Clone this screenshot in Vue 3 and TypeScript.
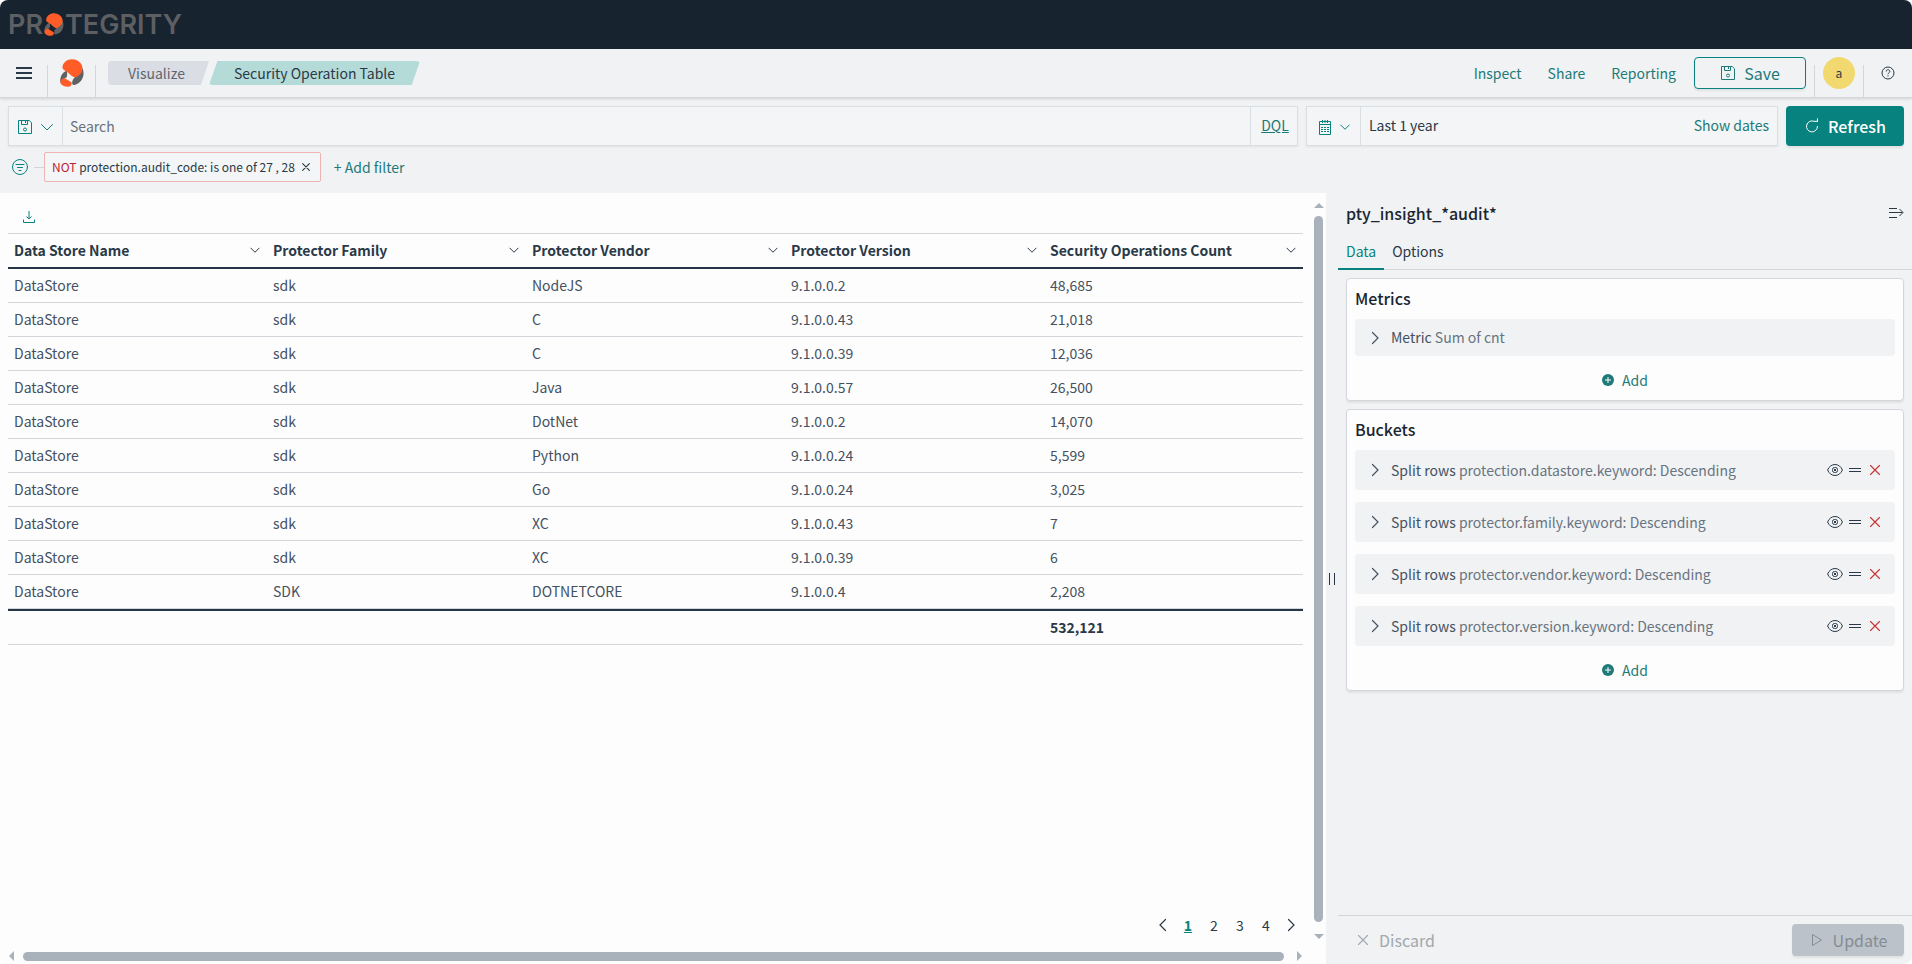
<script setup lang="ts">
import { ref } from 'vue'

const query = ref('')
const columns = ['Data Store Name', 'Protector Family', 'Protector Vendor', 'Protector Version', 'Security Operations Count']
const rows = [
  ['DataStore', 'sdk', 'NodeJS', '9.1.0.0.2', '48,685'],
  ['DataStore', 'sdk', 'C', '9.1.0.0.43', '21,018'],
  ['DataStore', 'sdk', 'C', '9.1.0.0.39', '12,036'],
  ['DataStore', 'sdk', 'Java', '9.1.0.0.57', '26,500'],
  ['DataStore', 'sdk', 'DotNet', '9.1.0.0.2', '14,070'],
  ['DataStore', 'sdk', 'Python', '9.1.0.0.24', '5,599'],
  ['DataStore', 'sdk', 'Go', '9.1.0.0.24', '3,025'],
  ['DataStore', 'sdk', 'XC', '9.1.0.0.43', '7'],
  ['DataStore', 'sdk', 'XC', '9.1.0.0.39', '6'],
  ['DataStore', 'SDK', 'DOTNETCORE', '9.1.0.0.4', '2,208'],
]
const buckets = ['protection.datastore', 'protector.family', 'protector.vendor', 'protector.version']
</script>

<template>
  <div class="app">
    <svg class="symbols" aria-hidden="true">
      <symbol id="disk" viewBox="0 0 16 16">
        <path d="M1.5 1.5h10.8l2.2 2.2v10.8h-13zM4.5 1.5v4h6v-4M8.5 2v2" fill="none" stroke="currentColor" />
        <circle cx="8" cy="10.5" r="1.5" fill="none" stroke="currentColor" />
      </symbol>
      <symbol id="down" viewBox="0 0 16 16">
        <path d="M2.5 5.5 8 11l5.5-5.5" fill="none" stroke="currentColor" stroke-linecap="round" vector-effect="non-scaling-stroke" />
      </symbol>
      <symbol id="right" viewBox="0 0 16 16">
        <path d="M5.5 2.5 11 8l-5.5 5.5" fill="none" stroke="currentColor" stroke-width="1.2" stroke-linecap="round" />
      </symbol>
      <symbol id="left" viewBox="0 0 16 16">
        <path d="M10.5 2.5 5 8l5.5 5.5" fill="none" stroke="currentColor" stroke-width="1.2" stroke-linecap="round" />
      </symbol>
      <symbol id="cross" viewBox="0 0 16 16">
        <path d="m3.5 3.5 9 9m0-9-9 9" fill="none" stroke="currentColor" stroke-width="1.1" stroke-linecap="round" vector-effect="non-scaling-stroke" />
      </symbol>
      <symbol id="mark" viewBox="0 0 24 28">
        <path d="M22.300 9C25.500 15 22.500 24 14.500 26c-2.500.4-3-2.500-1.500-5.500 2-3.500 7.500-5 9.300-11.500z" fill="#606163" />
        <path d="M7.500 11.500C3 12.500-.5 17.500.3 24c1.200-3 3.500-4.500 6.200-5.500 1.200-2 .2-5 1-7z" fill="#606163" />
        <path d="M2.500 7.500C3.500 3 7.500.2 12 .3c6.500.2 10.500 4.500 10.500 9.200 0 5-4 7.500-7.500 9-2.500-.5-4.500-2.500-6.500-4.500-1.500-1.500-3.500-2-5-3.500-.8-.8-1.300-1.800-1-3z" fill="#ff5c28" />
        <path d="m4.300 19 7.200 4.300c.7 2-.2 3.700-2 4.200-3 .8-6.500-.2-8.500-2.500-1.500-2.500.3-5.200 3.300-6z" fill="#ff5c28" />
      </symbol>
    </svg>

    <div class="brandbar">
      <a class="wordmark" href="#" aria-label="Protegrity">
        <span>PR</span><svg width="20" height="23"><use href="#mark" /></svg><span>TEGRITY</span>
      </a>
    </div>

    <header class="header">
      <button class="menu" aria-label="Menu">
        <svg width="16" height="12"><path d="M0 1h16M0 6h16M0 11h16" stroke="currentColor" stroke-width="2" /></svg>
      </button>
      <a class="home" href="#" aria-label="Home"><svg width="24" height="28"><use href="#mark" /></svg></a>
      <nav class="crumbs" aria-label="Breadcrumbs">
        <a class="crumb first" href="#">Visualize</a>
        <span class="crumb last">Security Operation Table</span>
      </nav>
      <div class="actions">
        <button class="link">Inspect</button>
        <button class="link">Share</button>
        <button class="link">Reporting</button>
        <button class="save"><svg width="16" height="16"><use href="#disk" /></svg>Save</button>
      </div>
      <div class="account"><button class="avatar">a</button></div>
      <button class="help" aria-label="Help">
        <svg width="14" height="14" viewBox="0 0 14 14" fill="none" stroke="currentColor">
          <circle cx="7" cy="7" r="6" />
          <path d="M5.200 5.500c0-2.400 3.600-2.400 3.600 0 0 1.400-1.800 1.300-1.800 2.700M7 9.300v1.200" />
        </svg>
      </button>
    </header>

    <div class="querybar">
      <div class="box search">
        <button class="pick" aria-label="Saved queries">
          <svg width="16" height="16"><use href="#disk" /></svg>
          <svg width="16" height="16"><use href="#down" /></svg>
        </button>
        <input v-model="query" type="text" placeholder="Search" aria-label="Search" />
        <button class="dql">DQL</button>
      </div>
      <div class="box dates">
        <button class="pick" aria-label="Date quick select">
          <svg width="16" height="16" viewBox="0 0 16 16" fill="none" stroke="currentColor">
            <path d="M2.500 2.500h11v13h-11zM2.500 5.500h11M5.500 1v3M8 1v3M10.500 1v3" />
            <path d="M4 8.500h8M4 10.500h8M4 12.500h8" stroke-dasharray="2 1" />
          </svg>
          <svg width="12" height="12"><use href="#down" /></svg>
        </button>
        <button class="range">Last 1 year</button>
        <button class="show">Show dates</button>
      </div>
      <button class="refresh">
        <svg width="16" height="16" viewBox="0 0 16 16" fill="none" stroke="currentColor" stroke-linecap="round">
          <path d="M13.500 8.500A5.500 5.500 0 1 1 10 3.300h3.300M13.500.8v2.700" />
        </svg>
        Refresh
      </button>
    </div>

    <div class="filterbar">
      <button class="filter-menu" aria-label="Filter options">
        <svg width="16" height="16" viewBox="0 0 16 16" fill="none" stroke="currentColor" stroke-linecap="round">
          <circle cx="8" cy="8" r="7.500" /><path d="M4 5.500h8M5.500 8.500h5M7 11.500h2" />
        </svg>
      </button>
      <span class="dash"></span>
      <span class="pill">
        <span><b>NOT</b> protection.audit_code: is one of 27 , 28</span>
        <button aria-label="Remove filter"><svg width="12" height="12"><use href="#cross" /></svg></button>
      </span>
      <button class="add-filter">+ Add filter</button>
    </div>

    <main class="main">
      <section class="visual">
        <div class="content">
          <div class="tools">
            <button aria-label="Download">
              <svg width="12" height="12" viewBox="0 0 12 12" fill="none" stroke="currentColor">
                <path d="M6 0v7.500M3.500 5.500 6 8l2.500-2.500M.5 8.500v3h11v-3" />
              </svg>
            </button>
          </div>
          <table>
            <thead>
              <tr>
                <th v-for="c in columns" :key="c" scope="col">
                  <button>{{ c }}<svg width="12" height="12"><use href="#down" /></svg></button>
                </th>
              </tr>
            </thead>
            <tbody>
              <tr v-for="(r, i) in rows" :key="i"><td v-for="(v, j) in r" :key="j">{{ v }}</td></tr>
            </tbody>
            <tfoot>
              <tr><td></td><td></td><td></td><td></td><td>532,121</td></tr>
            </tfoot>
          </table>
          <nav class="pages" aria-label="Pagination">
            <button class="arrow" aria-label="Previous page"><svg width="16" height="16"><use href="#left" /></svg></button>
            <button class="current" aria-current="page">1</button>
            <button>2</button>
            <button>3</button>
            <button>4</button>
            <button class="arrow" aria-label="Next page"><svg width="16" height="16"><use href="#right" /></svg></button>
          </nav>
        </div>
        <div class="vscroll"><i class="up"></i><div class="thumb"></div><i class="dn"></i></div>
        <div class="hscroll"><i class="lt"></i><div class="thumb"></div><i class="rt"></i></div>
      </section>

      <button class="resizer" aria-label="Resize panel"></button>

      <aside class="editor">
        <div class="title">
          <h2>pty_insight_*audit*</h2>
          <button aria-label="Collapse panel">
            <svg width="16" height="12" viewBox="0 0 16 12" fill="none" stroke="currentColor"><path d="M1 1.500h8M1 5.500h13.500M1 10.500h8M11.500 2l3.500 3.500L11.500 9" /></svg>
          </button>
        </div>
        <div class="tabs" role="tablist">
          <button class="active" role="tab" aria-selected="true">Data</button>
          <button role="tab" aria-selected="false">Options</button>
        </div>
        <div class="groups">
          <section class="group">
            <h3>Metrics</h3>
            <div class="item short">
              <button class="toggle"><svg width="16" height="16"><use href="#right" /></svg><span>Metric <em>Sum of cnt</em></span></button>
            </div>
            <button class="add">
              <svg width="12" height="12"><circle cx="6" cy="6" r="6" fill="currentColor" /><path d="M3 6h6M6 3v6" stroke="#fff" /></svg>Add
            </button>
          </section>
          <section class="group">
            <h3>Buckets</h3>
            <div v-for="b in buckets" :key="b" class="item">
              <button class="toggle"><svg width="16" height="16"><use href="#right" /></svg><span>Split rows <em>{{ b }}.keyword: Descending</em></span></button>
              <button aria-label="Disable aggregation">
                <svg width="16" height="16" viewBox="0 0 16 16" fill="none" stroke="currentColor">
                  <path d="M.6 8C2 4.500 4.800 2.500 8 2.500S14 4.500 15.400 8C14 11.500 11.200 13.500 8 13.500S2 11.500.6 8z" /><rect x="5.500" y="5.500" width="5" height="5" rx="2" /><rect x="7.500" y="7.500" width="1" height="1" />
                </svg>
              </button>
              <button aria-label="Reorder"><svg width="12" height="12"><path d="M0 4.500h12M0 7.500h12" stroke="currentColor" /></svg></button>
              <button class="remove" aria-label="Remove"><svg width="16" height="16"><use href="#cross" /></svg></button>
            </div>
            <button class="add">
              <svg width="12" height="12"><circle cx="6" cy="6" r="6" fill="currentColor" /><path d="M3 6h6M6 3v6" stroke="#fff" /></svg>Add
            </button>
          </section>
        </div>
        <div class="footer">
          <button class="discard" disabled><svg width="16" height="16"><use href="#cross" /></svg>Discard</button>
          <button class="update" disabled>
            <svg width="16" height="16" viewBox="0 0 16 16"><path d="M3.500 2.500v11L12.500 8z" fill="none" stroke="currentColor" stroke-linejoin="round" /></svg>Update
          </button>
        </div>
      </aside>
    </main>
  </div>
</template>

<style>
body { margin: 0; background: #fff; }
</style>

<style scoped>
.app {
  --teal: #07827e;
  --ink: #2a3947;
  --line: #d3d7db;
  display: flex; flex-direction: column; height: 100vh;
  border-radius: 8px; overflow: hidden;
  font: 14px/20px "Noto Sans CJK SC", "Open Sans", sans-serif;
  color: var(--ink); background: #f0f2f4;
}
* { box-sizing: border-box; }
.symbols { position: absolute; width: 0; height: 0; }
svg { display: block; flex: none; }
button { font: inherit; color: inherit; background: none; border: 0; padding: 0; margin: 0; white-space: nowrap; }
a { color: inherit; text-decoration: none; }
h2, h3 { margin: 0; font-size: 16px; line-height: 22px; font-weight: 500; color: #1a2530; }

.brandbar { flex: none; display: flex; align-items: center; height: 49px; padding: 0 8px; background: #17232f; }
.wordmark { display: flex; align-items: center; gap: 1px; color: #5d5f62; font: 600 27px/32px Inter, sans-serif; }

.header { flex: none; display: flex; height: 49px; border-bottom: 1px solid var(--line); box-shadow: 0 1px 3px #0002; }
.menu { width: 47px; padding-left: 1px; display: grid; place-items: center; }
.home { width: 49px; margin-top: 16px; border: solid var(--line); border-width: 0 1px; display: grid; place-items: center; }
.home svg { margin-top: -16px; }
.crumbs { display: flex; align-items: center; padding-left: 12px; }
.crumb { height: 24px; line-height: 24px; padding: 0 20px; }
.first { width: 101px; background: #dadde3; color: #5d6570; border-radius: 4px 0 0 4px; clip-path: polygon(0 0, 100% 0, 92% 100%, 0 100%); }
.last { padding: 0 25px; background: #b5dbd9; border-radius: 4px; clip-path: polygon(4% 0, 100% 0, 96% 100%, 0 100%); }
.actions { margin-left: auto; display: flex; align-items: center; gap: 26px; padding-right: 8px; color: #1d7a78; }
.save { display: flex; align-items: center; justify-content: center; gap: 8px; width: 112px; height: 32px; margin-left: -8px; border: 1px solid var(--teal); border-radius: 4px; font-size: 16px; box-shadow: 0 2px 2px #0001; }
.account { width: 50px; margin-top: 16px; border: solid var(--line); border-width: 0 1px; display: grid; place-items: center; }
.avatar { width: 32px; height: 32px; margin-top: -16px; border-radius: 50%; background: #f1d86f; font-size: 12px; }
.help { width: 48px; display: grid; place-items: center; }

.querybar { flex: none; display: flex; gap: 8px; padding: 8px 8px 0; }
.box { display: flex; height: 40px; background: #f3f5f6; border: 1px solid #d9dfe2; box-shadow: 0 1px 2px #0001; }
.box button, .search input { padding-bottom: 2px; }
.search { flex: 1; }
.pick { display: flex; align-items: center; justify-content: center; gap: 6px; border-right: 1px solid #d9dfe2; color: var(--teal); }
.box .pick { width: 54px; padding: 2px 0 0; }
.search input { flex: 1; border: 0; background: none; outline: 0; padding-left: 7px; font: inherit; }
.search input::placeholder { color: #69707a; opacity: 1; }
.dql { width: 47px; padding-left: 2px; border-left: 1px solid #d9dfe2; color: #1d7a78; text-decoration: underline; }
.dates { width: 472px; }
.range { flex: 1; text-align: left; padding-left: 8px; }
.show { padding-right: 8px; color: #1d7a78; }
.refresh { display: flex; align-items: center; justify-content: center; gap: 8px; width: 118px; height: 40px; border-radius: 4px; background: var(--teal); color: #fff; font-size: 16px; font-weight: 500; box-shadow: 0 2px 2px #0001; }

.filterbar { flex: none; display: flex; align-items: center; height: 47px; padding: 0 12px 5px; }
.filter-menu { color: var(--teal); }
.dash { width: 10px; margin-left: 6px; border-top: 1px solid #d0d6da; }
.pill { display: flex; align-items: center; gap: 5px; height: 30px; padding: 0 8px 0 7px; border: 1px solid #eeb3b3; border-radius: 2px; background: #f3f5f6; font-size: 12px; }
.pill b { font-weight: 400; color: #bd2030; }
.add-filter { margin-left: 13px; color: #1d7a78; }

.main { flex: 1; min-height: 0; display: flex; }
.visual { flex: 1; min-width: 0; display: grid; grid-template: minmax(0, 1fr) 16px / minmax(0, 1fr) 15px; background: #fdfdfe; }
.content { display: flex; flex-direction: column; padding: 0 8px; }
.tools { display: flex; align-items: flex-start; height: 40px; padding: 18px 0 0 15px; color: var(--teal); }
.content table { width: 100%; table-layout: fixed; border-collapse: separate; border-spacing: 0; color: #44515f; }
th { height: 36px; padding: 0; border-top: 1px solid var(--line); border-bottom: 2px solid #253746; }
th button { display: flex; justify-content: space-between; align-items: center; width: 100%; padding: 0 6px 1px; font-weight: 700; color: var(--ink); }
td { height: 34px; padding: 0 6px 1px; border-bottom: 1px solid var(--line); }
tfoot td { height: 36px; border-top: 2px solid #253746; font-weight: 700; color: var(--ink); }
.pages { display: flex; align-items: center; justify-content: flex-end; margin-top: auto; padding-bottom: 13px; }
.pages button { width: 26px; display: grid; place-items: center; }
.pages .arrow { width: 24px; }
.pages .current { color: var(--teal); font-weight: 700; text-decoration: underline; }
.vscroll, .hscroll { display: flex; align-items: center; }
.vscroll { flex-direction: column; padding: 10px 0 9px; }
.hscroll { padding: 0 9px; }
.thumb { flex: 1; background: #a9b1ba; border-radius: 5px; }
.vscroll .thumb { width: 9px; margin: 8px 0 12px; }
.hscroll .thumb { height: 9px; margin: 0 13px 0 9px; }
i { border: 5px solid transparent; }
.up { border-top: 0; border-bottom-color: #a9b1ba; }
.dn { border-bottom: 0; border-top-color: #a9b1ba; }
.lt { border-left: 0; border-right-color: #a9b1ba; }
.rt { border-right: 0; border-left-color: #a9b1ba; }

.resizer { flex: none; width: 12px; display: grid; place-items: center; }
.resizer::before { content: ""; width: 4px; height: 12px; border: solid #253746; border-width: 0 1px; }
.editor { flex: none; width: 574px; display: flex; flex-direction: column; }
.title { display: flex; align-items: center; justify-content: space-between; height: 40px; padding: 0 8px 1px; }
.tabs { display: flex; height: 37px; border-bottom: 1px solid var(--line); }
.tabs button { padding: 0 8px 2px; height: 37px; }
.tabs .active { padding-bottom: 0; color: var(--teal); border-bottom: 2px solid var(--teal); }
.groups { flex: 1; padding: 8px; display: flex; flex-direction: column; gap: 8px; }
.group { display: flex; flex-direction: column; gap: 12px; padding: 8px; border: 1px solid var(--line); border-radius: 4px; background: #fdfdfe; box-shadow: 0 2px 2px #0001; }
.group h3 { margin-bottom: -2px; }
.item { display: flex; align-items: center; gap: 6px; height: 40px; padding: 0 12px; border-radius: 4px; background: #f0f2f4; }
.short { height: 37px; }
.toggle { display: flex; align-items: center; gap: 8px; flex: 1; text-align: left; color: #44515f; }
.toggle span { padding-bottom: 1px; }
.toggle em { font-style: normal; color: #69747f; }
.remove { color: #c93232; }
.add { align-self: center; display: flex; align-items: center; gap: 8px; height: 24px; color: #1d7a78; }
.footer { display: flex; align-items: center; justify-content: space-between; height: 49px; padding: 0 8px 0 17px; border-top: 1px solid var(--line); font-size: 16px; }
.footer button { display: flex; align-items: center; gap: 8px; }
.discard { color: #a2a8ae; }
.update { width: 112px; height: 32px; justify-content: center; border-radius: 4px; background: #bcc2c9; color: #858c93; box-shadow: 0 2px 2px #0001; }
</style>
